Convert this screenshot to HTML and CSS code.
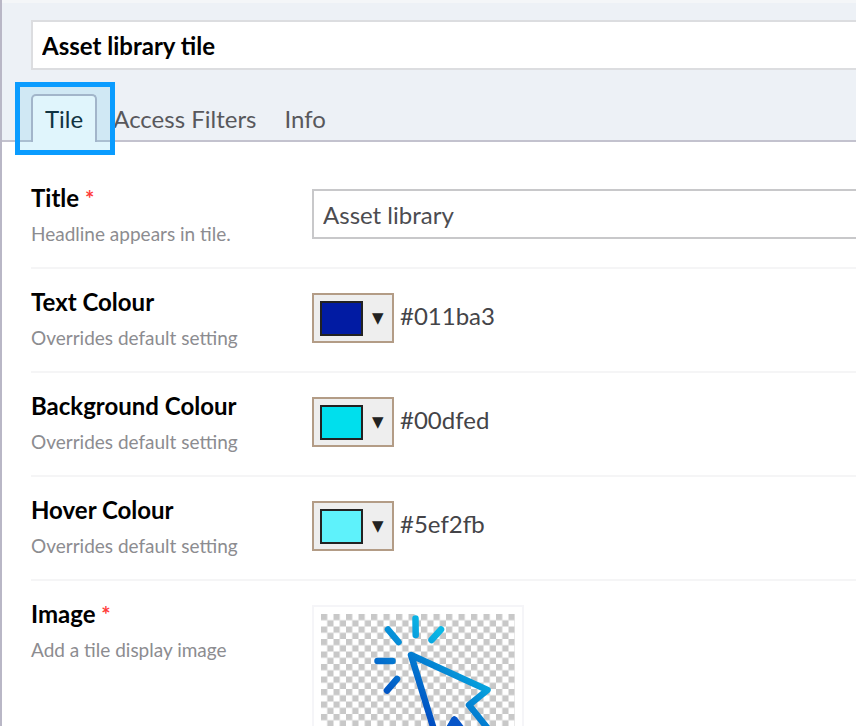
FILE: index.html
```html
<!DOCTYPE html>
<html lang="en">
<head>
<meta charset="utf-8">
<meta name="viewport" content="width=device-width, initial-scale=1">
<title>Asset library tile</title>
<link rel="stylesheet" href="styles.css">
</head>
<body>
<main class="editor">
  <header class="editor-header">
    <input class="field name-field" type="text" aria-label="Name" value="Asset library tile">
    <nav class="tabs">
      <a class="tab tab-active" href="#tile">Tile<span class="tab-highlight"></span></a>
      <a class="tab" href="#access">Access Filters</a>
      <a class="tab" href="#info">Info</a>
    </nav>
  </header>
  <form class="properties" id="tile">
    <div class="property">
      <div class="property-label">
        <label class="property-name" for="title">Title <span class="required">*</span></label>
        <p class="hint">Headline appears in tile.</p>
      </div>
      <input class="field" id="title" type="text" value="Asset library">
    </div>
    <div class="property">
      <div class="property-label">
        <label class="property-name" for="text-colour">Text Colour</label>
        <p class="hint">Overrides default setting</p>
      </div>
      <div class="colour">
        <button class="picker" id="text-colour" type="button"><span class="swatch swatch-text"></span><span class="arrow">▼</span></button>
        <span class="hex">#011ba3</span>
      </div>
    </div>
    <div class="property">
      <div class="property-label">
        <label class="property-name" for="background-colour">Background Colour</label>
        <p class="hint">Overrides default setting</p>
      </div>
      <div class="colour">
        <button class="picker" id="background-colour" type="button"><span class="swatch swatch-background"></span><span class="arrow">▼</span></button>
        <span class="hex">#00dfed</span>
      </div>
    </div>
    <div class="property">
      <div class="property-label">
        <label class="property-name" for="hover-colour">Hover Colour</label>
        <p class="hint">Overrides default setting</p>
      </div>
      <div class="colour">
        <button class="picker" id="hover-colour" type="button"><span class="swatch swatch-hover"></span><span class="arrow">▼</span></button>
        <span class="hex">#5ef2fb</span>
      </div>
    </div>
    <div class="property">
      <div class="property-label">
        <label class="property-name" for="image">Image <span class="required">*</span></label>
        <p class="hint">Add a tile display image</p>
      </div>
      <button class="thumb" id="image" type="button">
        <svg class="thumb-art" viewBox="0 0 194 194" aria-hidden="true">
          <defs>
            <pattern id="checker" width="12.5" height="12.5" patternUnits="userSpaceOnUse">
              <path fill="#fff" d="M0 0h12.5v12.5H0z"/>
              <path fill="#c8c8c8" d="M0 0h6.25v6.25H0zM6.25 6.25h6.25v6.25H6.25z"/>
            </pattern>
            <linearGradient id="ink" gradientUnits="userSpaceOnUse" x1="68" y1="95" x2="128" y2="25">
              <stop offset="0" stop-color="#0048c0"/>
              <stop offset="1" stop-color="#0ab8e6"/>
            </linearGradient>
            <linearGradient id="ink-arrow" gradientUnits="userSpaceOnUse" x1="105" y1="110" x2="155" y2="60">
              <stop offset="0" stop-color="#0048c0"/>
              <stop offset="1" stop-color="#06a5de"/>
            </linearGradient>
          </defs>
          <path fill="url(#checker)" d="M0 0h194v194H0z"/>
          <g fill="none" stroke-linecap="round" stroke-linejoin="round">
            <path stroke="url(#ink)" stroke-width="6.5" d="M94.5 4.500L94.700 21M67 15.500L77.500 28M120 15.500L110.500 26M56.500 47H71.500M76 65L66 76.500"/>
            <path stroke="url(#ink-arrow)" stroke-width="6.5" d="M90 41L166.500 76L148 91L172 121L154 136L133 106L118 132Z"/>
          </g>
          <path fill="#0755c8" d="M125 114L131 103.500Q133 100.500 136 103.500L144 114Z"/>
        </svg>
      </button>
    </div>
  </form>
</main>
</body>
</html>
```
FILE: styles.css
```css
* {
  box-sizing: border-box;
}

body {
  margin: 0;
  background: #fff;
  color: #000;
  font-family: Lato, "Liberation Sans", sans-serif;
  font-size: 24px;
  line-height: 28px;
}

input,
button {
  font: inherit;
  color: inherit;
}

.editor {
  height: 100vh;
  overflow: hidden;
  border-left: 2px solid #b9b7c6;
}

.editor-header {
  padding: 17px 0 0 29px;
  background: #edf1f6;
  border-top: 3px solid #f4f6f8;
  border-bottom: 2px solid #c3c2ce;
}

.field {
  display: block;
  width: 100%;
  height: 50px;
  padding: 0 9px;
  border: 2px solid #c8c8ca;
  border-right: 0;
  border-radius: 0;
  background: #fff;
  color: #4c4c50;
}

.name-field {
  border-color: #dcdde0;
  color: #000;
  font-weight: 700;
}

.tabs {
  display: flex;
  margin: 24px 0 -2px;
}

.tab {
  height: 48px;
  padding: 11px 14px 0;
  color: #58585c;
  text-decoration: none;
}

.tab-active {
  position: relative;
  margin-right: 2px;
  padding: 9px 12px 0;
  border: 2px solid #b9b7c6;
  border-bottom: 0;
  border-radius: 5px 5px 0 0;
  background: #fff;
  color: #14232b;
}

.tab-highlight {
  position: absolute;
  inset: -14px -20px -13px -18px;
  border: 5px solid #0a9cff;
  background: rgba(0, 170, 230, 0.12);
}

.properties {
  padding: 23px 0 0 29px;
}

.property {
  display: grid;
  grid-template-columns: 281px 1fr;
  padding: 24px 0 28px;
  border-bottom: 2px solid #f5f5f6;
}

.property-label {
  height: 50px;
}

.property-name {
  display: block;
  margin-top: -5px;
  font-weight: 700;
}

.required {
  color: #ff3b3b;
  font-size: 22px;
  line-height: 20px;
}

.hint {
  margin: 10px 0 0;
  color: #8c8c90;
  font-size: 19px;
  line-height: 24px;
}

.colour {
  display: flex;
  align-items: center;
  gap: 6px;
}

.picker {
  display: flex;
  align-items: center;
  gap: 9px;
  width: 82px;
  height: 50px;
  padding: 0 6px;
  border: 2px solid #b39c86;
  border-radius: 0;
  background: #eee;
  color: #222;
}

.swatch {
  width: 43px;
  height: 35px;
  border: 2px solid #222;
}

.swatch-text {
  background: #011ba3;
}

.swatch-background {
  background: #00dfed;
}

.swatch-hover {
  background: #5ef2fb;
}

.arrow {
  font-family: "DejaVu Sans", sans-serif;
  font-size: 15px;
}

.hex {
  padding-bottom: 4px;
  color: #444448;
}

.thumb {
  width: 212px;
  padding: 7px;
  border: 2px solid #f5f5f8;
  background: #fff;
}

.thumb-art {
  display: block;
  width: 100%;
}
```
